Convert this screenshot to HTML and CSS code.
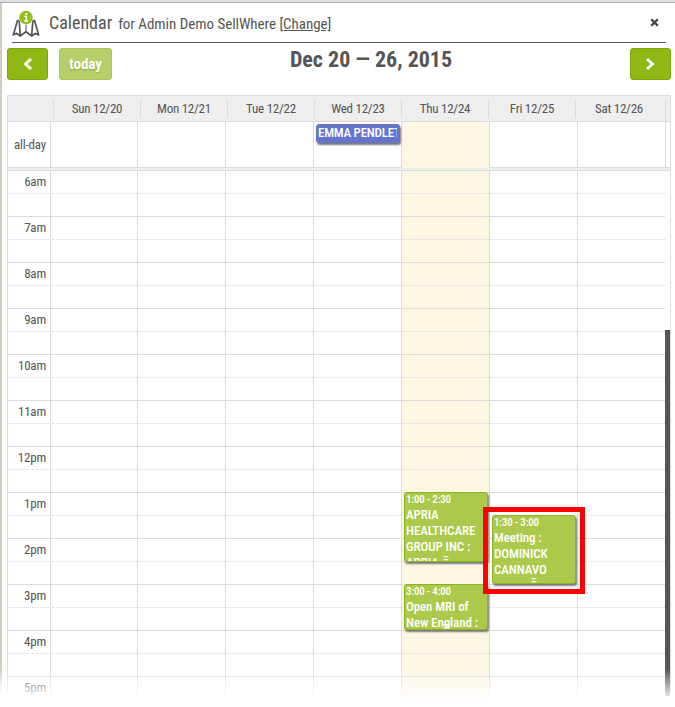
FILE: index.html
```html
<!DOCTYPE html>
<html lang="en">
<head>
<meta charset="utf-8">
<title>Calendar</title>
<link rel="stylesheet" href="styles.css">
</head>
<body>
<div class="topline"></div>
<div class="panel">
  <header class="head">
    <svg class="logo" width="28" height="28" viewBox="0 0 28 28">
      <path d="M8 10.500 H5.500 L1.300 25 L4.800 23.300 L8.300 26 L14 21.800 L19.700 26 L23.200 23.300 L26.700 25 L22.500 10.500 H20 M7.200 11 L8.300 25.500 M20.800 11 L19.700 25.500" fill="none" stroke="#555" stroke-width="1.700" stroke-linejoin="round"/>
      <path d="M14 14 V22" stroke="#555" stroke-width="1"/>
      <circle cx="14" cy="7.500" r="7.300" fill="#fff"/>
      <circle cx="14" cy="7.500" r="6.800" fill="#93c01f"/>
      <rect x="13.200" y="3" width="2" height="1.800" fill="#fff"/>
      <path d="M12.500 6.400 H14.200 V10.800 M12.300 11 H16" fill="none" stroke="#fff" stroke-width="1.300"/>
    </svg>
    <h1 class="name">Calendar</h1>
    <span class="owner">for Admin Demo SellWhere <a class="change">[Change]</a></span>
    <svg class="close" width="9" height="9" viewBox="0 0 9 9"><path d="M1.200 1.200 L7.800 7.800 M7.800 1.200 L1.200 7.800" stroke="#444" stroke-width="2.300"/></svg>
  </header>
  <nav class="bar">
    <button class="btn"><svg width="11" height="14" viewBox="0 0 11 14"><path d="M9 2 L3.500 7 L9 12" fill="none" stroke="#fff" stroke-width="3"/></svg></button>
    <button class="btn today">today</button>
    <h2 class="range">Dec 20 — 26, 2015</h2>
    <button class="btn"><svg width="11" height="14" viewBox="0 0 11 14"><path d="M2 2 L7.500 7 L2 12" fill="none" stroke="#fff" stroke-width="3"/></svg></button>
  </nav>
  <main class="cal">
    <div class="days">
      <span></span><span>Sun 12/20</span><span>Mon 12/21</span><span>Tue 12/22</span><span>Wed 12/23</span><span>Thu 12/24</span><span>Fri 12/25</span><span>Sat 12/26</span><span></span>
    </div>
    <div class="allday cols">
      <div class="axis">all-day</div>
      <div></div><div></div><div></div>
      <div><div class="event blue"><div class="clip">EMMA PENDLETON</div></div></div>
      <div class="now"></div><div></div><div></div><div class="gutter"></div>
    </div>
    <div class="split"></div>
    <div class="grid">
      <div class="cols">
        <div class="hours">
          <span>6am</span><span>7am</span><span>8am</span><span>9am</span><span>10am</span><span>11am</span><span>12pm</span><span>1pm</span><span>2pm</span><span>3pm</span><span>4pm</span><span>5pm</span>
        </div>
        <div></div><div></div><div></div><div></div>
        <div class="now">
          <div class="event e1"><div class="time">1:00 - 2:30</div><div>APRIA HEALTHCARE GROUP INC : APRIA</div><b class="grip">=</b></div>
          <div class="event e2"><div class="time">3:00 - 4:00</div><div>Open MRI of New England :</div><b class="grip">=</b></div>
        </div>
        <div>
          <div class="event e3"><div class="time">1:30 - 3:00</div><div>Meeting : DOMINICK CANNAVO</div><b class="grip">=</b></div>
          <div class="mark"></div>
        </div>
        <div></div>
      </div>
      <div class="thumb"></div>
    </div>
  </main>
  <div class="fade"></div>
</div>
</body>
</html>
```
FILE: styles.css
```css
* { box-sizing: border-box; }
body {
  margin: 0;
  height: 707px;
  overflow: hidden;
  font: 13px/16px "Roboto Condensed", Roboto, "Liberation Sans", sans-serif;
  font-stretch: 75%;
  color: #555;
  background: #fff;
}
.topline { height: 3px; background: #e0e0e0; border-bottom: 1px solid #aaa; }
.panel {
  position: relative;
  height: 704px;
  padding: 0 4px 0 7px;
  background: linear-gradient(#cfcdbd 95%, #fff 99%) 0 0 / 2px 100% no-repeat #fff;
  overflow: hidden;
}
.head {
  display: flex;
  align-items: center;
  height: 40px;
  margin: 0 5px;
  border-bottom: 1px solid #555;
}
.logo { margin-top: 2px; }
.name { margin: 0 6px 0 9px; font-size: 18px; font-weight: 400; }
.owner { flex: 1; padding-top: 2px; font-size: 15px; letter-spacing: -0.03px; }
.change { text-decoration: underline; }
.close { margin-right: 7px; }
.bar { display: flex; height: 52px; padding-top: 5px; }
.btn {
  display: flex;
  align-items: center;
  justify-content: center;
  width: 41px;
  height: 32px;
  padding: 0;
  border: 1px solid #7ba60e;
  border-radius: 3px;
  background: #8fb814;
  color: #fff;
  font: inherit;
}
.today {
  width: 53px;
  margin-left: 11px;
  border-color: #a9c75f;
  background: #b5d069;
  font-size: 15px;
  font-weight: 700;
  text-shadow: 0 1px 2px #8aa83c;
}
.range { flex: 1; margin: 0; font-size: 22px; line-height: 24px; text-align: center; }
.cal { height: 620px; border: 1px solid #dcdcdc; }
.days {
  display: grid;
  grid-template-columns: 46px repeat(6, 87px) 90px 4px;
  height: 26px;
  padding-top: 3px;
  background: #eee;
  border-bottom: 1px solid #dcdcdc;
}
.days span { height: 19px; line-height: 19px; letter-spacing: -0.25px; text-align: center; border-right: 1px solid #dcdcdc; }
.days span:last-child { border: 0; }
.days span:nth-child(8) { height: 22px; padding: 0 3px 0 0; }
.cols { display: grid; grid-template-columns: 42px 87px repeat(6, 88px) 5px; }
.cols > div { position: relative; border-left: 1px solid #dcdcdc; }
.cols > .axis, .cols > .hours { border-left: 0; letter-spacing: -0.2px; }
.allday { height: 45px; }
.axis { padding-right: 4px; line-height: 46px; text-align: right; }
.cols > .now { background: #fcf6e3; }
.split { height: 4px; border: solid #dcdcdc; border-width: 1px 0; background: #eee; }
.grid { position: relative; height: 560px; }
.grid .cols {
  height: 560px;
  width: 657px;
  grid-template-columns: 42px 87px repeat(5, 88px) 88px;
}
.grid .cols::before {
  content: "";
  position: absolute;
  z-index: 1;
  inset: 0 5px 0 0;
  background: repeating-linear-gradient(transparent 0 45px, #dcdcdc 45px 46px);
}
.grid .cols::after {
  content: "";
  position: absolute;
  z-index: 1;
  inset: 0 5px 0 0;
  background: repeating-linear-gradient(90deg, #d9d9d9 0 1px, transparent 1px 2px);
  -webkit-mask: repeating-linear-gradient(transparent 0 22px, #000 22px 23px, transparent 23px 46px);
}
.hours span { display: block; height: 46px; padding: 3px 4px 0 0; text-align: right; }
.event {
  position: absolute;
  z-index: 2;
  left: 2px;
  width: 84px;
  padding: 0 1px;
  overflow: hidden;
  border: 1px solid #8cb51d;
  border-radius: 3px;
  background: #abc94a;
  color: #fff;
  font-weight: 500;
  letter-spacing: -0.1px;
  box-shadow: 1px 2px 2px #777;
}
.time { font-size: 11px; line-height: 14px; letter-spacing: -0.2px; }
.blue { top: 2px; height: 19px; padding: 0 1px; border-color: #6575cb; background: #6575cb; }
.clip { width: 79px; overflow: hidden; white-space: nowrap; letter-spacing: -0.25px; }
.e1 { top: 321px; height: 70px; }
.e2 { top: 413px; height: 46px; }
.e3 { top: 344px; height: 69px; }
.grip { position: absolute; left: 0; right: 0; bottom: -3px; font-size: 12px; line-height: 11px; font-weight: 500; font-stretch: 100%; text-align: center; }
.mark { position: absolute; z-index: 3; left: -7px; top: 336px; width: 102px; height: 87px; border: 5px solid #f00; }
.thumb { position: absolute; z-index: 2; right: 0; top: 159px; width: 5px; height: 366px; background: #555; }
.fade {
  position: absolute;
  z-index: 5;
  left: 0;
  right: 0;
  bottom: 0;
  height: 38px;
  background: linear-gradient(rgba(255,255,255,0), #fff 85%);
}
```
